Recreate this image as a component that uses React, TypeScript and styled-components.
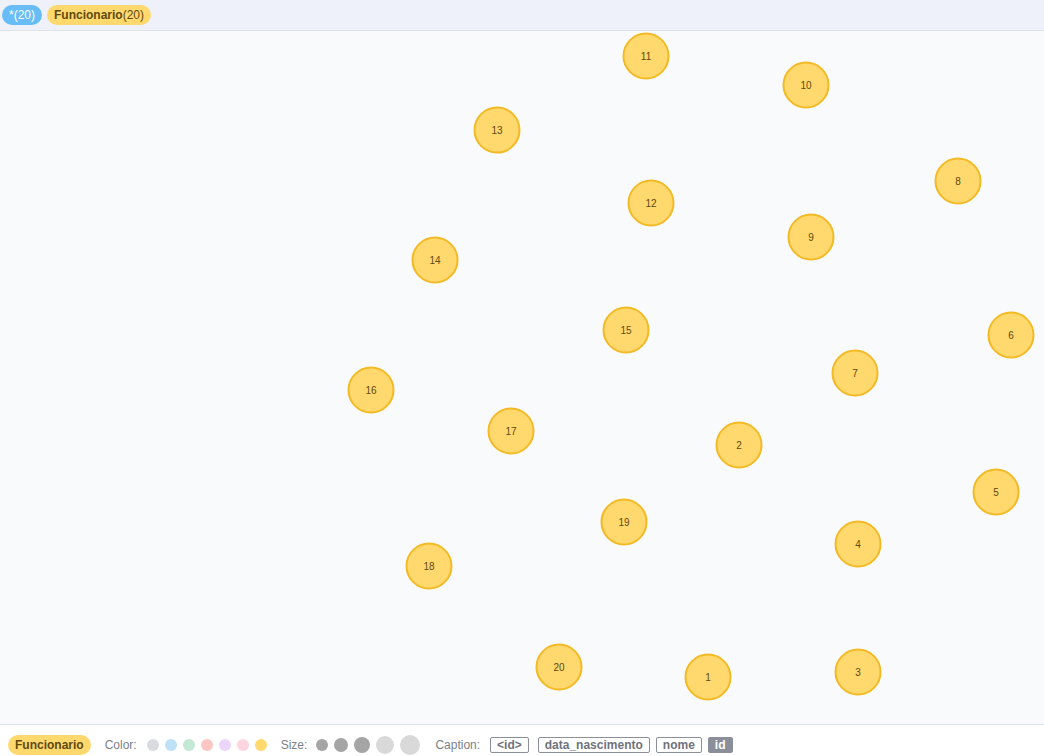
import React from "react";
import styled, { createGlobalStyle } from "styled-components";

const Global = createGlobalStyle`
  html, body { margin: 0; padding: 0; height: 100%; }
  body { font-family: "Liberation Sans", Arial, sans-serif; background: #ffffff; }
  #root { height: 100%; }
`;

const Frame = styled.div`
  display: flex;
  flex-direction: column;
  width: 1044px;
  height: 756px;
  overflow: hidden;
`;

const TopBar = styled.div`
  height: 30px;
  flex: none;
  display: flex;
  align-items: center;
  gap: 5px;
  padding: 0 2px;
  background: #eef1f9;
  border-bottom: 1px solid #dfe3ea;
`;

const Pill = styled.span<{ $bg: string; $fg: string }>`
  display: inline-flex;
  align-items: center;
  height: 20px;
  padding: 0 7px;
  border-radius: 10px;
  background: ${(p) => p.$bg};
  color: ${(p) => p.$fg};
  font-size: 12px;
  line-height: 20px;
  white-space: nowrap;
`;

const Bold = styled.b`
  font-weight: 700;
`;

const Canvas = styled.div`
  flex: 1;
  background: #f9fafb;
  position: relative;
`;

const Graph = styled.svg`
  display: block;
  width: 100%;
  height: 100%;
`;

const BottomBar = styled.div`
  box-sizing: border-box;
  height: 32px;
  flex: none;
  display: flex;
  align-items: center;
  padding: 8px 8px 0;
  background: #ffffff;
  border-top: 1px solid #dde1e8;
  font-size: 12px;
  color: #7b7f88;
`;

const Label = styled.span<{ $gap: number }>`
  margin-right: ${(p) => p.$gap}px;
`;

const Group = styled.div<{ $after: number }>`
  display: flex;
  align-items: center;
  gap: 6px;
  margin-right: ${(p) => p.$after}px;
`;

const Dot = styled.span<{ $c: string; $s: number }>`
  display: inline-block;
  width: ${(p) => p.$s}px;
  height: ${(p) => p.$s}px;
  border-radius: 50%;
  background: ${(p) => p.$c};
`;

const Tag = styled.span<{ $active?: boolean; $wide?: boolean }>`
  display: inline-flex;
  align-items: center;
  height: 14px;
  padding: 0 6px;
  margin-right: ${(p) => (p.$wide ? 3 : 0)}px;
  border-radius: 2px;
  border: 1px solid #8b8f99;
  background: ${(p) => (p.$active ? "#8b8f99" : "transparent")};
  color: ${(p) => (p.$active ? "#ffffff" : "#6f737c")};
  font-weight: 700;
  font-size: 12px;
`;

const nodes: [string, number, number][] = [
  ["11", 646, 56],
  ["10", 806, 85],
  ["13", 497, 130],
  ["8", 958, 181],
  ["12", 651, 203],
  ["9", 811, 237],
  ["14", 435, 260],
  ["15", 626, 330],
  ["6", 1011, 335],
  ["7", 855, 373],
  ["16", 371, 390],
  ["17", 511, 431],
  ["2", 739, 445],
  ["5", 996, 492],
  ["19", 624, 522],
  ["4", 858, 544],
  ["18", 429, 566],
  ["20", 559, 667],
  ["1", 708, 677],
  ["3", 858, 672],
];

const colorDots = ["#d9dbe0", "#bfe1f8", "#c3e8d6", "#fcc6c3", "#ecd5fb", "#fdd5de", "#ffd86e"];
const sizeDots: [number, string][] = [
  [12, "#a5a5a5"],
  [14, "#a5a5a5"],
  [16, "#a5a5a5"],
  [18, "#d9d9d9"],
  [20, "#d9d9d9"],
];

export default function App() {
  return (
    <Frame>
      <Global />
      <TopBar>
        <Pill $bg="#68bdf6" $fg="#ffffff">*(20)</Pill>
        <Pill $bg="#ffd86e" $fg="#604a0e">
          <Bold>Funcionario</Bold>(20)
        </Pill>
      </TopBar>
      <Canvas>
        <Graph>
          {nodes.map(([id, x, y]) => (
            <g key={id} transform={`translate(${x},${y - 31})`}>
              <circle r={22.5} fill="#ffd86e" stroke="#f3ba25" strokeWidth={2} />
              <text
                textAnchor="middle"
                dy="3.5"
                fontSize="10"
                fill="#604a0e"
                fontFamily="Liberation Sans, Arial, sans-serif"
              >
                {id}
              </text>
            </g>
          ))}
        </Graph>
      </Canvas>
      <BottomBar>
        <Group $after={14}>
          <Pill $bg="#ffd86e" $fg="#604a0e">
            <Bold>Funcionario</Bold>
          </Pill>
        </Group>
        <Label $gap={10}>Color:</Label>
        <Group $after={14}>
          {colorDots.map((c) => (
            <Dot key={c} $c={c} $s={12} />
          ))}
        </Group>
        <Label $gap={9}>Size:</Label>
        <Group $after={15}>
          {sizeDots.map(([s, c], i) => (
            <Dot key={i} $c={c} $s={s} />
          ))}
        </Group>
        <Label $gap={10}>Caption:</Label>
        <Group $after={0}>
          <Tag $wide>&lt;id&gt;</Tag>
          <Tag>data_nascimento</Tag>
          <Tag>nome</Tag>
          <Tag $active>id</Tag>
        </Group>
      </BottomBar>
    </Frame>
  );
}
